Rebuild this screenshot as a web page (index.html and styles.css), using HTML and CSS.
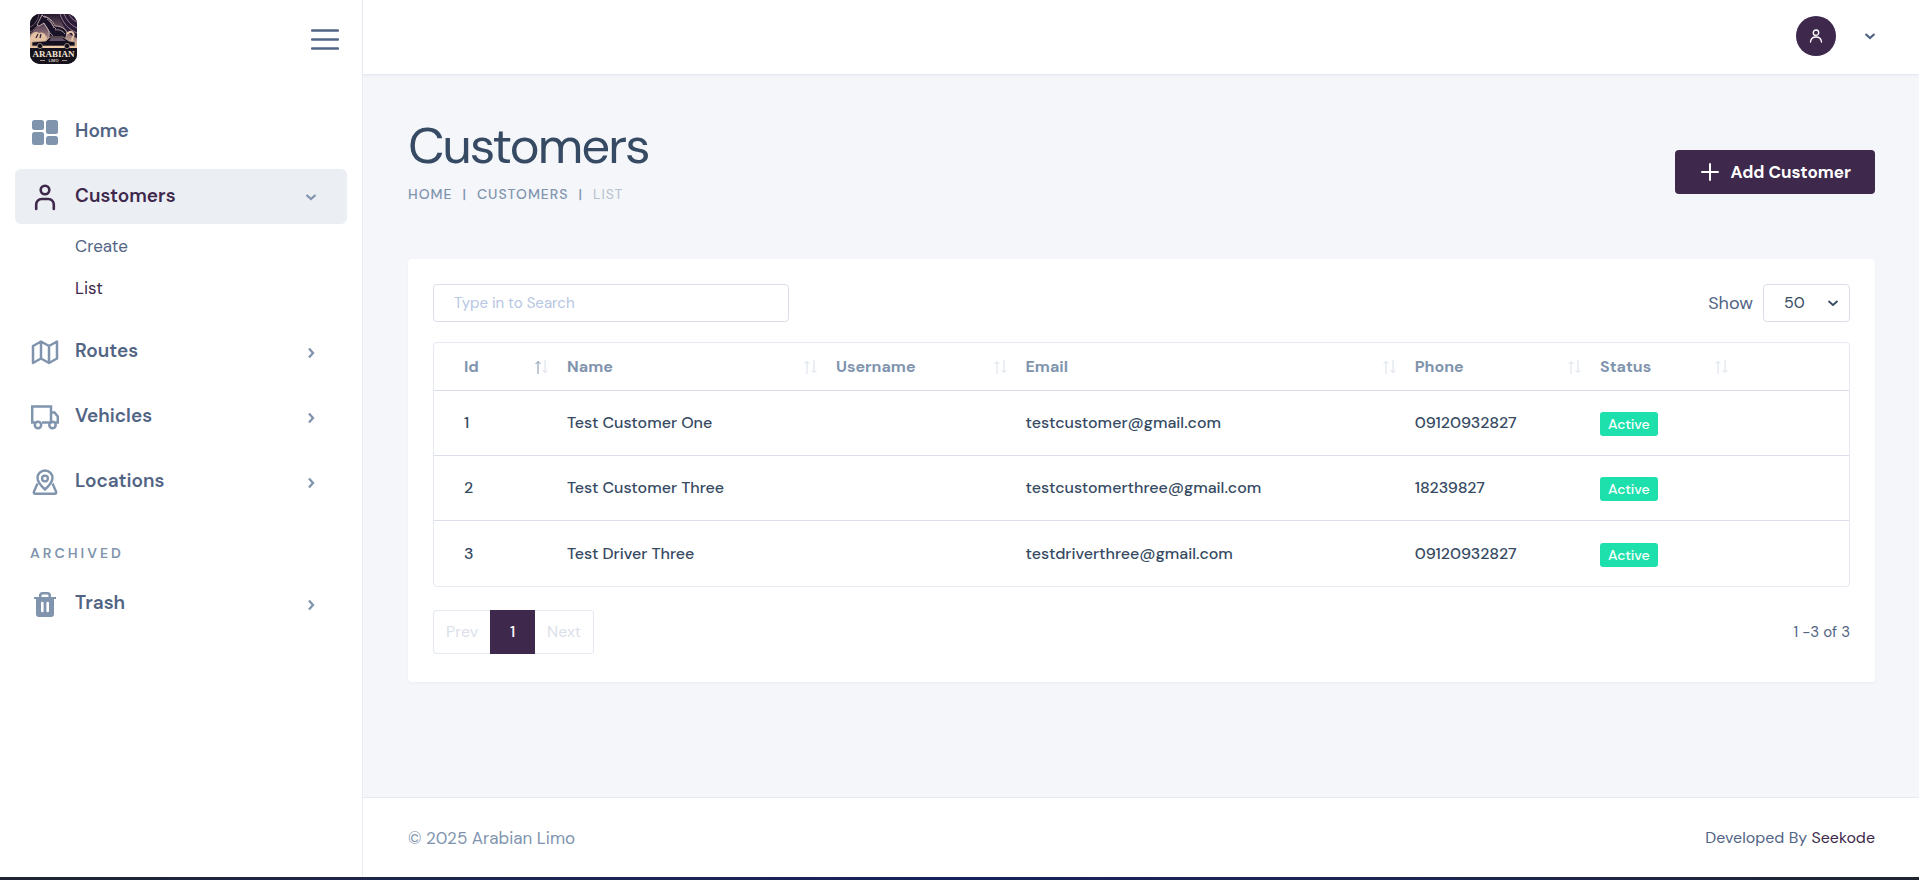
FILE: index.html
```html
<!DOCTYPE html>
<html lang="en">
<head>
<meta charset="utf-8">
<meta name="viewport" content="width=device-width, initial-scale=1">
<title>Customers</title>
<link rel="stylesheet" href="styles.css">
</head>
<body>
<svg class="sprite" aria-hidden="true">
  <symbol id="chev" viewBox="0 0 12 12"><path d="M1.500 4L6 8l4.500-4" fill="none" stroke="currentColor" stroke-width="2.300"/></symbol>
  <symbol id="chev-thin" viewBox="0 0 12 12"><path d="M1.500 4L6 8l4.500-4" fill="none" stroke="currentColor" stroke-width="1.700"/></symbol>
  <symbol id="sort-up" viewBox="0 0 6 14"><path d="M3 14V1.500M.5 4L3 1.500 5.500 4" fill="none" stroke="currentColor"/></symbol>
  <symbol id="sort-down" viewBox="0 0 6 14"><path d="M3 0v12.500M.5 10L3 12.500 5.500 10" fill="none" stroke="currentColor"/></symbol>
</svg>
<div class="app">
  <aside class="sidebar">
    <div class="brand">
      <a href="#" class="logo" aria-label="Arabian Limo">
        <svg viewBox="0 0 47 50" width="47" height="50">
          <defs>
            <linearGradient id="sky" x1="0" y1="0" x2="0" y2="1"><stop offset="0" stop-color="#241b30"/><stop offset=".5" stop-color="#7a5f6c"/><stop offset="1" stop-color="#f0cba6"/></linearGradient>
            <clipPath id="round"><rect width="47" height="50" rx="10"/></clipPath>
          </defs>
          <g clip-path="url(#round)">
            <rect width="47" height="50" fill="#17131f"/>
            <rect width="47" height="34" fill="url(#sky)"/>
            <path d="M0 0h12C10 8 6 15 0 20z" fill="#17121f"/>
            <path d="M0 13c5-2 8-7 9-13M0 18c7-4 11-10 12-18" fill="none" stroke="#77597a"/>
            <path d="M28 0h19v24C37 21 32 10 28 0z" fill="#2a1d38"/>
            <path d="M30 0c3 9 8 15 17 19M34 0c3 7 7 11 13 14M39 0c2 4 4 6 8 8" fill="none" stroke="#a98795" stroke-width=".9"/>
            <path d="M0 24c2-6 6-7 9-5 4-2 7 2 8 5l-3 5H0z" fill="#e3c1a2"/>
            <path d="M8 20l-2 4M11 20l-1 4" stroke="#2a1d38" stroke-width="1.200"/>
            <path d="M7 11l3-6 2-4 2 2c6 0 9 5 11 9 6 0 11 3 12 7l-2 8H17c3-5 3-9 0-13l-3-5-5 3z" fill="#1a1328" stroke="#d9c3bd" stroke-width=".8"/>
            <path d="M14 2c6 2 8 7 10 12M13 9c5 4 5 9 10 13M17 5c4 2 5 7 9 10M25 16c4-1 8 1 10 4" fill="none" stroke="#c3a9b2" stroke-width=".8"/>
            <path d="M37 20c5-5 8 0 6 3s1 4-3 5" fill="none" stroke="#e8c6a8" stroke-width="1.800"/>
            <path d="M2 28l14-1 4-4h13l6 4 6 1v4H2z" fill="#14101d" stroke="#cfae96" stroke-width=".7"/>
            <path d="M19 27l2-3h11l4 3z" fill="#62526a"/>
            <circle cx="10" cy="32" r="2.600" fill="#0e0b14" stroke="#a88f87" stroke-width=".8"/>
            <circle cx="37" cy="32" r="2.600" fill="#0e0b14" stroke="#a88f87" stroke-width=".8"/>
            <path d="M13 33h21" stroke="#f3d3ac" stroke-width="1.500"/>
            <path d="M0 35h47v15H0z" fill="#15121c"/>
            <text x="23.500" y="43" class="logo-name" text-anchor="middle">ARABIAN</text>
            <text x="23.500" y="48" class="logo-sub" text-anchor="middle">LIMO</text>
            <path d="M10 46.500h5M32 46.500h5" stroke="#d8c6b8" stroke-width=".7"/>
          </g>
        </svg>
      </a>
      <button class="toggle" aria-label="Toggle menu">
        <svg viewBox="0 0 28 22" width="28" height="22"><path d="M1 2.500h26M1 11.500h26M1 20.500h26" stroke="currentColor" stroke-width="2.500" stroke-linecap="round"/></svg>
      </button>
    </div>
    <nav class="menu">
      <a class="item" href="#">
        <svg class="icon" viewBox="0 0 28 28" fill="currentColor"><rect x="1" y="2" width="12" height="10" rx="2.500"/><rect x="15" y="2" width="12" height="14" rx="2.500"/><rect x="1" y="14" width="12" height="13" rx="2.500"/><rect x="15" y="18" width="12" height="9" rx="2.500"/></svg>
        <span>Home</span>
      </a>
      <a class="item active" href="#">
        <svg class="icon" viewBox="0 0 28 28" fill="none" stroke="currentColor" stroke-width="2.600" stroke-linecap="round"><circle cx="14" cy="7" r="4.300"/><path d="M5.200 26v-4.500a5.500 5.500 0 0 1 5.500-5.500h6.600a5.500 5.500 0 0 1 5.500 5.500V26"/></svg>
        <span>Customers</span>
        <svg class="chev"><use href="#chev"/></svg>
      </a>
      <div class="submenu">
        <a href="#">Create</a>
        <a href="#" class="current">List</a>
      </div>
      <a class="item" href="#">
        <svg class="icon" viewBox="0 0 28 28" fill="none" stroke="currentColor" stroke-width="2.500" stroke-linejoin="round"><path d="M2 8l8-4.500 8 4.500 8-4.500v17L18 25l-8-4.500L2 25zM10 3.500v17M18 8v17"/></svg>
        <span>Routes</span>
        <svg class="chev right"><use href="#chev"/></svg>
      </a>
      <a class="item" href="#">
        <svg class="icon" viewBox="0 0 28 28" fill="none" stroke="currentColor" stroke-width="2.500"><path d="M4 19.500H1.200v-16H20v16h-9M20 9.500h3.500l3.300 4v6h-2.500M20 19.500h-2"/><circle cx="7" cy="22" r="3.200"/><circle cx="21.500" cy="22" r="3.200"/></svg>
        <span>Vehicles</span>
        <svg class="chev right"><use href="#chev"/></svg>
      </a>
      <a class="item" href="#">
        <svg class="icon" viewBox="0 0 28 28" fill="none" stroke="currentColor" stroke-width="2.400" stroke-linejoin="round"><path d="M14 21.500c-4-3.700-7.500-7-7.500-11.500a7.500 7.500 0 0 1 15 0c0 4.500-3.500 7.800-7.500 11.500z"/><circle cx="14" cy="10.500" r="2.900"/><path d="M6.500 15.500L3 23.500q-.8 2.300 1.500 2.300h19q2.300 0 1.500-2.300l-3.500-8"/></svg>
        <span>Locations</span>
        <svg class="chev right"><use href="#chev"/></svg>
      </a>
      <h2 class="heading">Archived</h2>
      <a class="item" href="#">
        <svg class="icon" viewBox="0 0 28 28" fill="currentColor"><path d="M3 7h5V5.500A3.500 3.500 0 0 1 11.500 2h5A3.500 3.500 0 0 1 20 5.500V7h5v2h-2v15a3 3 0 0 1-3 3H8a3 3 0 0 1-3-3V9H3zm7.500 0h7V5.700a1.200 1.200 0 0 0-1.200-1.200h-4.600a1.200 1.200 0 0 0-1.200 1.200zM10 13v8a1.300 1.300 0 0 0 2.600 0v-8a1.300 1.300 0 0 0-2.600 0zm5.400 0v8a1.300 1.300 0 0 0 2.600 0v-8a1.300 1.300 0 0 0-2.600 0z" fill-rule="evenodd"/></svg>
        <span>Trash</span>
        <svg class="chev right"><use href="#chev"/></svg>
      </a>
    </nav>
  </aside>
  <div class="page">
    <header class="topbar">
      <button class="user" aria-label="Account menu">
        <span class="avatar"><svg viewBox="0 0 14 14" width="14" height="14" fill="none" stroke="currentColor" stroke-width="1.400" stroke-linecap="round"><circle cx="7" cy="3.700" r="2.700"/><path d="M1.500 13c.3-3.300 2.500-5 5.500-5s5.200 1.700 5.500 5"/></svg></span>
        <svg class="chev"><use href="#chev"/></svg>
      </button>
    </header>
    <main class="content">
      <div class="title-row">
        <div>
          <h1>Customers</h1>
          <nav class="crumbs" aria-label="Breadcrumb"><a href="#">Home</a><i>|</i><a href="#">Customers</a><i>|</i><span>List</span></nav>
        </div>
        <button class="add">
          <svg viewBox="0 0 18 18" width="18" height="18"><path d="M9 1v16M1 9h16" stroke="currentColor" stroke-width="2" stroke-linecap="round"/></svg>
          Add Customer
        </button>
      </div>
      <section class="card">
        <div class="tools">
          <input class="search" type="search" placeholder="Type in to Search" aria-label="Search customers">
          <div class="show">
            <label for="size">Show</label>
            <div class="select"><select id="size"><option>50</option></select><svg class="chev"><use href="#chev-thin"/></svg></div>
          </div>
        </div>
        <div class="frame">
          <table>
            <colgroup><col class="c-id"><col class="c-name"><col class="c-user"><col class="c-mail"><col class="c-phone"><col class="c-status"><col></colgroup>
            <thead>
              <tr>
                <th><div class="sort asc">Id<span><svg><use href="#sort-up"/></svg><svg><use href="#sort-down"/></svg></span></div></th>
                <th><div class="sort">Name<span><svg><use href="#sort-up"/></svg><svg><use href="#sort-down"/></svg></span></div></th>
                <th><div class="sort">Username<span><svg><use href="#sort-up"/></svg><svg><use href="#sort-down"/></svg></span></div></th>
                <th><div class="sort">Email<span><svg><use href="#sort-up"/></svg><svg><use href="#sort-down"/></svg></span></div></th>
                <th><div class="sort">Phone<span><svg><use href="#sort-up"/></svg><svg><use href="#sort-down"/></svg></span></div></th>
                <th><div class="sort">Status<span><svg><use href="#sort-up"/></svg><svg><use href="#sort-down"/></svg></span></div></th>
                <th></th>
              </tr>
            </thead>
            <tbody>
              <tr><td>1</td><td>Test Customer One</td><td></td><td>testcustomer@gmail.com</td><td>09120932827</td><td><span class="badge">Active</span></td><td></td></tr>
              <tr><td>2</td><td>Test Customer Three</td><td></td><td>testcustomerthree@gmail.com</td><td>18239827</td><td><span class="badge">Active</span></td><td></td></tr>
              <tr><td>3</td><td>Test Driver Three</td><td></td><td>testdriverthree@gmail.com</td><td>09120932827</td><td><span class="badge">Active</span></td><td></td></tr>
            </tbody>
          </table>
        </div>
        <div class="pager-row">
          <div class="pager"><button disabled>Prev</button><button class="on">1</button><button disabled>Next</button></div>
          <p>1 -3 of 3</p>
        </div>
      </section>
    </main>
    <footer class="footer">
      <p class="copy">© 2025 Arabian Limo</p>
      <p>Developed By <a href="#">Seekode</a></p>
    </footer>
  </div>
</div>
<div class="edge"></div>
</body>
</html>
```
FILE: styles.css
```css
* { box-sizing: border-box; }
body {
  margin: 0;
  min-height: 100vh;
  display: flex;
  flex-direction: column;
  background: #f4f6fa;
  color: #526484;
  font: 400 16px/24px "DM Sans", Inter, "Liberation Sans", sans-serif;
}
h1, h2, p { margin: 0; }
a { color: inherit; text-decoration: none; }
button, input, select { font: inherit; color: inherit; }
button { border: 0; padding: 0; background: none; cursor: pointer; }
.sprite { display: none; }
.chev { width: 12px; height: 12px; flex: none; }
.chev.right { transform: rotate(-90deg); }

.app { flex: 1; display: flex; }
.sidebar { width: 363px; flex: none; background: #fff; border-right: 1px solid #e9edf3; }
.brand { height: 74px; padding: 4px 23px 0 30px; display: flex; align-items: center; justify-content: space-between; }
.logo svg { display: block; }
.logo-name { font: 700 9px "Liberation Serif", serif; fill: #f3e3d0; }
.logo-sub { font: 700 4px "Liberation Sans", sans-serif; fill: #d8c6b8; }
.toggle { color: #526484; display: flex; }
.menu { padding: 30px 15px; }
.item {
  display: flex;
  align-items: center;
  gap: 16px;
  height: 55px;
  margin-bottom: 10px;
  padding: 0 30px 0 16px;
  border-radius: 6px;
  color: #526484;
  font-size: 19px;
  font-weight: 600;
}
.item span { flex: 1; padding-bottom: 2px; }
.icon { width: 28px; height: 28px; color: #8094ae; flex: none; }
.item .chev { color: #8094ae; }
.item .right { margin-top: 3px; }
.active { background: #ebeef2; color: #3e284c; margin-bottom: 0; }
.active .icon { color: #3e284c; }
.submenu { padding: 1px 0 15px 60px; }
.submenu a { display: block; font-size: 17px; line-height: 42px; }
.submenu .current { color: #3e284c; }
.heading {
  margin: 32px 0 11px 15px;
  color: #8094ae;
  font-size: 14px;
  line-height: 24px;
  font-weight: 600;
  letter-spacing: 3px;
  text-transform: uppercase;
}

.page { flex: 1; min-width: 0; display: flex; flex-direction: column; }
.topbar {
  height: 75px;
  padding: 0 43px 2px;
  display: flex;
  align-items: center;
  justify-content: flex-end;
  background: #fff;
  border-bottom: 1px solid #e8e8f4;
  box-shadow: 0 1px 3px rgba(54, 74, 99, .05);
}
.user { display: flex; align-items: center; gap: 28px; }
.avatar { width: 40px; height: 40px; border-radius: 50%; background: #3e284c; color: #fff; display: grid; place-items: center; }

.content { flex: 1; padding: 43px 44px 0 45px; }
.title-row { display: flex; justify-content: space-between; align-items: flex-start; margin-bottom: 53px; }
h1 { color: #364a63; font-size: 51px; line-height: 56px; font-weight: 400; letter-spacing: -2px; }
.crumbs {
  display: flex;
  gap: 10px;
  margin-top: 8px;
  color: #8094ae;
  font-size: 14px;
  font-weight: 500;
  letter-spacing: 1px;
  text-transform: uppercase;
}
.crumbs i { font-style: normal; }
.crumbs span { color: #b7c2d0; font-weight: 400; }
.add {
  display: flex;
  align-items: center;
  gap: 12px;
  height: 44px;
  margin-top: 32px;
  padding: 0 24px 0 26px;
  border-radius: 4px;
  background: #3e284c;
  color: #fff;
  font-size: 17px;
  font-weight: 700;
}

.card { padding: 25px; background: #fff; border-radius: 4px; box-shadow: 0 1px 3px rgba(54, 74, 99, .05); }
.tools { display: flex; justify-content: space-between; align-items: center; margin-bottom: 20px; }
.search { width: 356px; height: 38px; padding: 0 20px; border: 1px solid #dbdfea; border-radius: 4px; background: #fff; font-size: 15px; appearance: none; }
.search::placeholder { color: #b6c6e3; opacity: 1; }
.show { display: flex; align-items: center; gap: 10px; font-size: 18px; }
.select { display: grid; grid-template-columns: 1fr; align-items: center; width: 87px; color: #364a63; }
.select select { grid-area: 1 / 1; height: 38px; padding: 0 20px; border: 1px solid #dbdfea; border-radius: 4px; background: #fff; appearance: none; font-size: 16px; }
.select .chev { grid-area: 1 / 1; justify-self: end; margin-right: 11px; pointer-events: none; }

.frame { border: 1px solid #e5e9f2; border-radius: 4px; }
table { width: 100%; table-layout: fixed; border-collapse: separate; border-spacing: 0; color: #364a63; font-weight: 500; }
.c-id { width: 8.7%; }
.c-name { width: 19%; }
.c-user { width: 13.4%; }
.c-mail { width: 27.5%; }
.c-phone { width: 13.1%; }
.c-status { width: 10.4%; }
th, td { padding: 0 9px 0 10px; text-align: left; }
th:first-child, td:first-child { padding-left: 30px; }
th { height: 48px; color: #8094ae; font-weight: 700; border-bottom: 1px solid #dbdfea; }
td { height: 65px; white-space: nowrap; border-bottom: 1px solid #dbdfea; }
tbody tr:last-child td { border-bottom: 0; }
.sort { display: flex; justify-content: space-between; align-items: center; }
.sort span { display: flex; gap: 1px; }
.sort svg { width: 6px; height: 14px; color: #d9e0e9; }
.sort.asc svg:first-child { color: #8094ae; }
.badge {
  display: inline-block;
  height: 24px;
  margin-top: 2px;
  padding: 0 8px;
  border-radius: 3px;
  background: #1ee0ac;
  color: #fff;
  font-size: 14px;
}

.pager-row { display: flex; align-items: center; justify-content: space-between; margin: 23px 0 3px; }
.pager-row p { font-size: 15px; }
.pager { display: flex; height: 44px; }
.pager button { padding: 0 12px; border: 1px solid #e5e9f2; border-radius: 4px 0 0 4px; border-right: 0; color: #dbdfea; }
.pager button:last-child { border-radius: 0 4px 4px 0; border-right: 1px solid #e5e9f2; border-left: 0; }
.pager .on { width: 45px; border: 0; border-radius: 0; background: #3e284c; color: #fff; font-weight: 500; }

.footer {
  height: 80px;
  padding: 1px 44px 0 45px;
  display: flex;
  align-items: center;
  justify-content: space-between;
  background: #fff;
  border-top: 1px solid #e5e9f2;
}
.footer .copy { color: #8094ae; font-size: 17px; }
.footer a { color: #3e284c; }
.edge { height: 3px; background: linear-gradient(90deg, #1f2530, #1d2551 25%, #17215c 50%, #1d2551 75%, #1f2530); }
```
